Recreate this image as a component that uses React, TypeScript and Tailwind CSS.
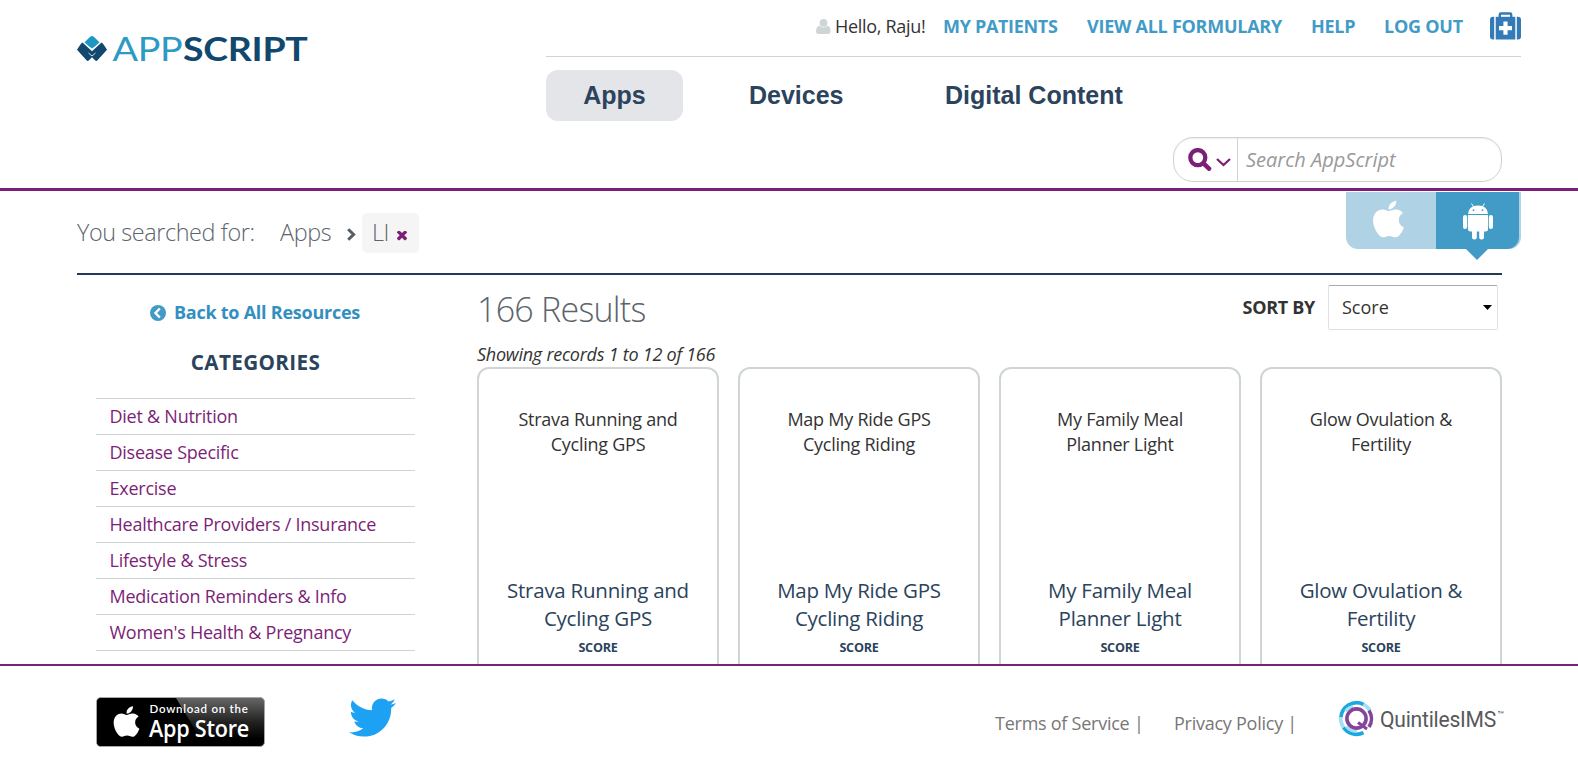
import React from "react";
import { FaApple, FaTwitter } from "react-icons/fa";

const categories = [
  "Diet & Nutrition",
  "Disease Specific",
  "Exercise",
  "Healthcare Providers / Insurance",
  "Lifestyle & Stress",
  "Medication Reminders & Info",
  "Women's Health & Pregnancy",
];

const apps = [
  ["Strava Running and", "Cycling GPS"],
  ["Map My Ride GPS", "Cycling Riding"],
  ["My Family Meal", "Planner Light"],
  ["Glow Ovulation &", "Fertility"],
];

function AppScriptLogo() {
  return (
    <svg className="overflow-visible" width="240" height="40" viewBox="0 0 240 40" aria-label="AppScript">
      <path d="M13.500 0.600Q15 -0.600 16.500 0.600L22.500 6.300L18.500 10L15 12.600L11.500 10L7.500 6.300Z" fill="#1f97c5" />
      <path
        d="M5.500 6.500L15 15.200L24.500 6.500Q25.500 6.500 30 13.800L20.500 24.300Q19.300 25.600 18 24.300L15 21.300L12 24.300Q10.700 25.600 9.500 24.300L0 13.800Q4.500 6.500 5.500 6.500Z"
        fill="#12486e"
      />
      <path d="M11.500 17L15 20L18.500 17" stroke="#fff" strokeWidth="0.800" fill="none" />
      <text x="35.500" y="24.800" fontFamily="Lato" fontSize="33" textLength="70" lengthAdjust="spacingAndGlyphs" fill="#2b9bc5">APP</text>
      <text x="106" y="24.800" fontFamily="Lato" fontWeight="700" fontSize="33" textLength="124.500" lengthAdjust="spacingAndGlyphs" fill="#12486e">SCRIPT</text>
    </svg>
  );
}

function MedkitIcon() {
  return (
    <svg className="mt-[12px]" width="31" height="28" viewBox="0 0 31 28" fill="#337ab7">
      <path d="M4.200 4.800V27.500H3Q0 27.500 0 24.500V7.800Q0 4.800 3 4.800Z" />
      <path d="M26.800 4.800V27.500H28Q31 27.500 31 24.500V7.800Q31 4.800 28 4.800Z" />
      <path d="M5.700 4.800H25.300V27.500H5.700Z" />
      <path d="M9.800 5.500V2.500Q9.800 1.500 10.800 1.500H20.200Q21.200 1.500 21.200 2.500V5.500" fill="none" stroke="#337ab7" strokeWidth="2.400" />
      <path d="M13.400 9.500H17.600V14H22V18.200H17.600V22.700H13.400V18.200H9V14H13.400Z" fill="#fff" />
    </svg>
  );
}

function AndroidIcon() {
  return (
    <svg width="30" height="37" viewBox="0 0 30 37" fill="#fff">
      <path d="M5 11Q5.500 2.500 15 2.500Q24.500 2.500 25 11Z" />
      <path d="M8.500 0.500L11 4.500M21.500 0.500L19 4.500" stroke="#fff" strokeWidth="1" />
      <circle cx="10.500" cy="7.200" r="0.900" fill="#429bc7" />
      <circle cx="19.500" cy="7.200" r="0.900" fill="#429bc7" />
      <path d="M5 12H25V26Q25 28.500 22.500 28.500H7.500Q5 28.500 5 26Z" />
      <rect x="0" y="12" width="4.200" height="14" rx="2.100" />
      <rect x="25.800" y="12" width="4.200" height="14" rx="2.100" />
      <rect x="9" y="25" width="4.800" height="11.500" rx="2.200" />
      <rect x="16.200" y="25" width="4.800" height="11.500" rx="2.200" />
    </svg>
  );
}

function Header() {
  return (
    <header className="flex h-[191px] justify-between border-b-[3px] border-[#7c1f76] pl-[77px]">
      <div className="pt-[36px]">
        <AppScriptLogo />
      </div>
      <div className="mr-[57px] w-[975px]">
        <div className="flex h-[57px] border-b border-[#cfd3d3] font-bold whitespace-nowrap text-[#429bc7]">
          <div className="flex w-[397px] pl-[270px] pt-[14px] font-normal text-[#333]">
            <svg className="mr-[4px] mt-[5px] shrink-0" width="15" height="15" viewBox="0 0 15 15" fill="#cfd5d5">
              <circle cx="7.500" cy="3.900" r="3.900" />
              <path d="M3.300 6.800Q7.500 10 11.700 6.800Q14.500 7.500 14.500 12Q14.500 15 12 15H2.500Q0 15 0 12Q0.200 7.500 3.300 6.800Z" />
            </svg>
            <span className="tracking-[-0.3px]">Hello, Raju!</span>
          </div>
          <a className="w-[144px] pt-[14px] tracking-[-0.32px]">MY PATIENTS</a>
          <a className="w-[224px] pt-[14px] tracking-[-0.26px]">VIEW ALL FORMULARY</a>
          <a className="w-[73px] pt-[14px]">HELP</a>
          <a className="w-[106px] pt-[14px]">LOG OUT</a>
          <MedkitIcon />
        </div>
        <nav className="mt-[13px] flex h-[51px] font-['Liberation_Sans',Arial,sans-serif] text-[25px] leading-[51px] font-bold tracking-normal text-[#2b435c]">
          <a className="w-[137px] rounded-[12px] bg-[#e4e5e9] text-center">Apps</a>
          <a className="ml-[66px] w-[196px]">Devices</a>
          <a>Digital Content</a>
        </nav>
        <div className="mt-[16px] ml-[627px] flex h-[45px] w-[329px] rounded-[20px] border border-[#cfd3d3] shadow-[inset_0_1px_2px_rgba(0,0,0,0.07)]">
          <div className="flex w-[64px] items-center border-r border-[#cfd3d3] pl-[14px] text-[#7c1f76]">
            <svg width="24" height="23" viewBox="0 0 24 23" fill="none" stroke="currentColor">
              <circle cx="9.800" cy="9.600" r="7.500" strokeWidth="4.300" />
              <path d="M15.500 15.300L21 20.600" strokeWidth="4.600" strokeLinecap="round" />
            </svg>
            <svg className="mt-[5px] ml-[4px]" width="15" height="9" viewBox="0 0 15 9" fill="none" stroke="currentColor" strokeWidth="2.300">
              <path d="M1 1L7.500 7L14 1" />
            </svg>
          </div>
          <span className="pl-[8px] text-[20px] leading-[43px] tracking-normal text-[#999] italic">Search AppScript</span>
        </div>
      </div>
    </header>
  );
}

function Breadcrumb() {
  return (
    <section className="flex h-[84px] justify-between pl-[77px]">
      <div className="flex h-[84px] w-[1425px] shrink-0 border-b-2 border-[#223a56] pt-[22px] text-[23.4px] leading-[38px] font-light tracking-[-0.4px] text-[#5b656d]">
        <span className="w-[203px]">You searched for:</span>
        <span className="w-[67px]">Apps</span>
        <svg className="mt-[15px] mr-[6px]" width="9" height="13" viewBox="0 0 9 13" fill="none" stroke="#555e66" strokeWidth="3">
          <path d="M1.200 1.200L6.600 6.500L1.200 11.800" />
        </svg>
        <span className="flex h-[40px] w-[57px] rounded-[5px] bg-[#f5f5f5] pl-[10px]">
          LI
          <svg className="mt-[18px] ml-[8px]" width="10" height="10" viewBox="302 440 1188 1190" fill="#7c1f76">
            <path d="M1490 1322q0 40-28 68l-136 136q-28 28-68 28t-68-28l-294-294-294 294q-28 28-68 28t-68-28l-136-136q-28-28-28-68t28-68l294-294-294-294q-28-28-28-68t28-68l136-136q28-28 68-28t68 28l294 294 294-294q28-28 68-28t68 28l136 136q28 28 28 68t-28 68l-294 294 294 294q28 28 28 68z" />
          </svg>
        </span>
      </div>
      <div className="relative">
        <div className="absolute top-px right-[57px] flex h-[57px] w-[175px] overflow-hidden rounded-b-[12px] bg-[#afd2e4]">
          <div className="flex w-[90px] justify-center pt-[6px] pr-[5px]">
            <FaApple className="h-[42px] w-[35px] text-white" />
          </div>
          <div className="w-[83px] rounded-br-[12px] bg-[#429bc7] pt-[11px] pl-[27px]">
            <AndroidIcon />
          </div>
        </div>
        <svg className="absolute top-[58px] right-[90px]" width="22" height="11" viewBox="0 0 22 11">
          <path d="M0 0H22L11 11Z" fill="#429bc7" />
        </svg>
      </div>
    </section>
  );
}

function Sidebar() {
  return (
    <aside className="w-[319px]">
      <a className="mt-[25px] flex h-[25px] items-center pl-[54px] font-bold whitespace-nowrap text-[#338fc0]">
        <svg className="mr-[8px]" width="16" height="16" viewBox="0 0 16 16">
          <circle cx="8" cy="8" r="8" fill="#429bc7" />
          <path d="M9.800 3.500L5.500 8L9.800 12.500" fill="none" stroke="#fff" strokeWidth="2.400" />
        </svg>
        Back to All Resources
      </a>
      <h2 className="mt-[22px] text-center text-[20.7px] leading-[30px] font-bold tracking-[0.35px] text-[#2b435c]">CATEGORIES</h2>
      <ul className="mt-[21px] border-t border-[#cfd5d5]">
        {categories.map((c) => (
          <li key={c} className="h-[36px] border-b border-[#cfd5d5] pl-[13.500px] leading-[35px] text-[#7c1f76]">{c}</li>
        ))}
      </ul>
    </aside>
  );
}

function Results() {
  return (
    <section className="w-[1025px]">
      <div className="flex h-[66px] justify-between">
        <h1 className="pt-[11px] text-[34px] leading-[46px] font-light tracking-[-0.75px] text-[#5b656d]">166 Results</h1>
        <div className="mt-[10px] mr-[4px] flex h-[45px] leading-[45px] text-[#333]">
          <span className="mr-[13px] font-bold tracking-[-0.3px]">SORT BY</span>
          <div className="flex w-[170px] items-center justify-between rounded-[2px] border border-t-[#aaa] border-r-[#dfdfe8] border-b-[#dfdfe8] border-l-[#dfdfe8] pr-[5px] pl-[13px]">
            <span className="leading-[43px] tracking-normal">Score</span>
            <svg width="9" height="5" viewBox="0 0 9 5"><path d="M0 0H9L4.500 5Z" /></svg>
          </div>
        </div>
      </div>
      <p className="h-[26px] leading-[26px] text-[#333] italic">Showing records 1 to 12 of 166</p>
      <div className="grid grid-cols-4 gap-[19px]">
        {apps.map(([a, b]) => (
          <article key={a} className="h-[420px] rounded-[12px] border-2 border-[#cfd5d5] pt-[38px] text-center">
            <div className="h-[169px] leading-[25px] text-[#333]">
              {a}<br />{b}
            </div>
            <h3 className="text-[20.5px] leading-[28px] text-[#2b435c]">
              {a}<br />{b}
            </h3>
            <div className="pt-px text-[12.6px] leading-[29px] font-bold text-[#2b435c]">SCORE</div>
          </article>
        ))}
      </div>
    </section>
  );
}

function AppStoreBadge() {
  return (
    <div className="flex h-[50px] w-[169px] rounded-[5px] border border-[#a6a6a6] bg-black bg-[linear-gradient(180deg,#666_0%,#222_50%,#000_85%)]">
      <svg className="overflow-visible" width="167" height="48" viewBox="0 0 167 48">
        <path d="M0 4Q0 0 4 0H79L108 48H4Q0 48 0 44Z" fill="#000" />
        <g transform="translate(12 6)" color="#fff"><FaApple width={31} height={39} size={35} /></g>
        <text x="52.500" y="15" fontFamily="Lato" fontWeight="600" fontSize="11.500" textLength="98" fill="#fff">Download on the</text>
        <text x="52" y="39" fontFamily="Open Sans" fontWeight="600" fontSize="23" textLength="100" lengthAdjust="spacingAndGlyphs" fill="#fff">App Store</text>
      </svg>
    </div>
  );
}

function QuintilesLogo() {
  return (
    <svg className="overflow-visible" width="166" height="38" viewBox="0 0 166 38" fill="none">
      <path d="M25.500 4.300A15.800 15.800 0 0 1 32 10.500" stroke="#a5def5" strokeWidth="3.600" />
      <path d="M25.500 4.300A15.800 15.800 0 0 0 2.900 17.500" stroke="#18a9e1" strokeWidth="3.600" />
      <path d="M2.700 17.500A15.800 15.800 0 0 0 5.500 27.500" stroke="#a5def5" strokeWidth="3.600" />
      <path d="M5.500 27.500A15.800 15.800 0 0 0 25.500 32.700" stroke="#18a9e1" strokeWidth="3.600" />
      <path d="M7.500 11A13 13 0 0 1 15 6.500" stroke="#a5def5" strokeWidth="3" />
      <path d="M8.500 26.500A13 13 0 0 0 19 31.200" stroke="#a5def5" strokeWidth="3" />
      <path d="M31 10.500A15 15 0 0 1 31 27" stroke="#85449b" strokeWidth="3.600" />
      <circle cx="18.500" cy="18.500" r="9.600" stroke="#85449b" strokeWidth="3.600" />
      <path d="M20 22.500L29 29" stroke="#85449b" strokeWidth="3" />
      <text x="42" y="27" fontFamily="Roboto" fontSize="22.500" textLength="116" lengthAdjust="spacingAndGlyphs" fill="#58595b">QuintilesIMS</text>
      <path d="M160 11.500H162M161 11.500V13.500M163 13.500V11.500L164 12.700L165 11.500V13.500" stroke="#58595b" strokeWidth="0.700" />
    </svg>
  );
}

function Footer() {
  return (
    <footer className="flex h-[99px] border-t-2 border-[#7c1f76] pl-[96px] whitespace-nowrap text-[#777]">
      <div className="w-[253px] pt-[31px]"><AppStoreBadge /></div>
      <div className="w-[646px] pt-[28px]"><FaTwitter className="h-[47px] w-[47px] text-[#1da1f2]" /></div>
      <span className="w-[179px] pt-[45px]">Terms of Service |</span>
      <span className="w-[164px] pt-[45px]">Privacy Policy |</span>
      <div className="pt-[34px]"><QuintilesLogo /></div>
    </footer>
  );
}

export default function App() {
  return (
    <div className="h-[763px] w-[1578px] overflow-hidden bg-white font-['Open_Sans',sans-serif] text-[18px] leading-[25px] tracking-[-0.25px]">
      <Header />
      <Breadcrumb />
      <main className="flex h-[389px] justify-between overflow-hidden pr-[76px] pl-[96px]">
        <Sidebar />
        <Results />
      </main>
      <Footer />
    </div>
  );
}
